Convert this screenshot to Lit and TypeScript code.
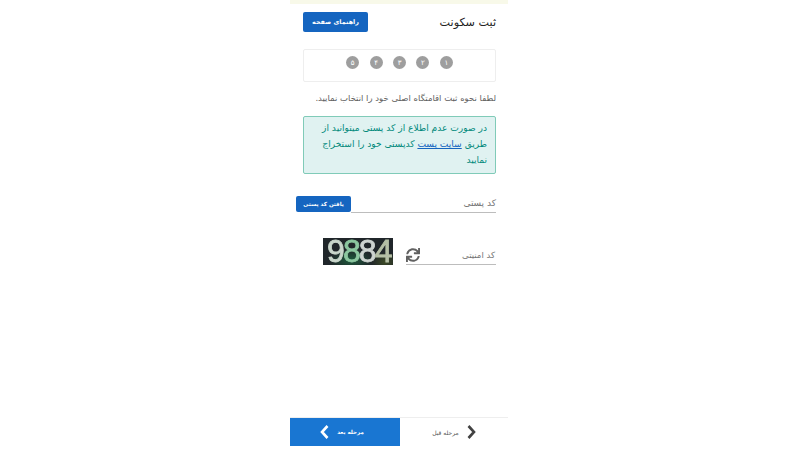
import { LitElement, html, css } from "lit";
import { customElement } from "lit/decorators.js";

@customElement("app-root")
export class AppRoot extends LitElement {
  static styles = css`
    :host { display: block; width: 800px; height: 450px; background: #fff; font-family: "DejaVu Sans", "Noto Sans", sans-serif; overflow: hidden; }
    * { box-sizing: border-box; }
    .col { width: 218px; height: 450px; margin-left: 290px; display: flex; flex-direction: column; direction: rtl; }
    .strip { height: 4px; background: #f8f9e9; flex: none; }
    .body { padding: 0 12px 0 13px; display: flex; flex-direction: column; flex: 1; }
    .head { display: flex; justify-content: space-between; align-items: center; margin-top: 8px; height: 20px; }
    .title { font-size: 11.2px; color: #222; }
    .guide { width: 65px; height: 20px; background: #1565c0; color: #fff; font-size: 6.4px; border-radius: 2px; display: flex; align-items: center; justify-content: center; font-weight: bold; }
    .steps { margin-top: 17px; height: 33px; border: 1px solid #eeeeee; border-radius: 2px; display: flex; justify-content: center; align-items: flex-start; padding-top: 6px; gap: 10.4px; }
    .dot { width: 13px; height: 13px; border-radius: 50%; background: #9e9e9e; color: #fff; font-size: 7px; display: flex; align-items: center; justify-content: center; }
    .lead { margin-top: 9px; font-size: 8.5px; line-height: 14px; color: #616161; white-space: nowrap; }
    .alert { margin-top: 11px; height: 58px; background: #e0f2f1; border: 1px solid #80cbb8; border-radius: 2px; padding: 3px 8px 3px 4px; font-size: 9.1px; line-height: 16px; color: #00897b; }
    .alert div { white-space: nowrap; }
    .alert a { color: #1565c0; text-decoration: underline; }
    .postal { margin-top: 22px; margin-left: -7px; height: 17px; display: flex; }
    .postal .label { flex: 1; border-bottom: 1px solid #bdbdbd; font-size: 9px; color: #757575; line-height: 14px; }
    .find { width: 55px; height: 16px; background: #1565c0; color: #fff; font-size: 5.5px; font-weight: bold; border-radius: 2px; display: flex; align-items: center; justify-content: center; }
    .sec { margin-top: 25px; display: flex; align-items: flex-start; height: 27px; }
    .sec .field { width: 90px; height: 27px; border-bottom: 1px solid #bdbdbd; display: flex; justify-content: space-between; align-items: center; font-size: 8.5px; color: #757575; padding-right: 1px; }
    .sec .field span { padding-top: 7px; }
    .sec svg { width: 14px; height: 14px; margin-top: 8px; display: block; }
    .captcha { margin-right: 13px; width: 70px; height: 27px; direction: ltr; background: radial-gradient(ellipse 22px 11px at 28px 22px, #1d5a3c, transparent), radial-gradient(ellipse 14px 10px at 62px 24px, #3c4a26, transparent), #20262a; color: #d5dbd6; font-family: "Liberation Sans", sans-serif; font-size: 32px; -webkit-text-stroke: 0.8px currentColor; line-height: 27px; letter-spacing: -1.9px; padding-left: 4px; white-space: nowrap; filter: blur(0.3px); }
    .captcha span:nth-child(1) { color: #c9d6cb; }
    .captcha span:nth-child(2) { color: #8cc7a0; }
    .captcha span:nth-child(3) { color: #cdd3d0; }
    .captcha span:nth-child(4) { color: #b5bfa6; }
    .foot { margin-top: auto; margin-bottom: 4px; height: 29px; flex: none; display: flex; border-top: 1px solid #eeeeee; }
    .foot > div { flex: 1; display: flex; align-items: center; justify-content: center; font-size: 6px; }
    .prev { color: #555; gap: 8px; }
    .next { background: #1976d2; color: #fff; gap: 8px; flex: 0 0 110px !important; padding-right: 6px; font-size: 5.5px !important; font-weight: bold; }
    .foot svg { width: 9px; height: 14px; display: block; }
  `;

  render() {
    const digits = ["۱", "۲", "۳", "۴", "۵"];
    return html`<div class="col">
      <div class="strip"></div>
      <div class="body">
        <div class="head">
          <div class="title">ثبت سکونت</div>
          <div class="guide">راهنمای صفحه</div>
        </div>
        <div class="steps">${digits.map((d) => html`<div class="dot">${d}</div>`)}</div>
        <div class="lead">لطفا نحوه ثبت اقامتگاه اصلی خود را انتخاب نمایید.</div>
        <div class="alert">
          <div>در صورت عدم اطلاع از کد پستی میتوانید از</div>
          <div>طریق <a>سایت پست</a> کدپستی خود را استخراج</div>
          <div>نمایید</div>
        </div>
        <div class="postal">
          <div class="label">کد پستی</div>
          <div class="find">یافتن کد پستی</div>
        </div>
        <div class="sec">
          <div class="field">
            <span>کد امنیتی</span>
            <svg viewBox="0 0 512 512" fill="#616161"><path d="M440.65 12.57l4 82.77A247.16 247.16 0 0 0 255.83 8C134.73 8 33.91 94.92 12.29 209.82A12 12 0 0 0 24.09 224h49.05a12 12 0 0 0 11.67-9.26 175.91 175.91 0 0 1 317-56.94l-101.46-4.86a12 12 0 0 0-12.57 12v47.41a12 12 0 0 0 12 12H500a12 12 0 0 0 12-12V12a12 12 0 0 0-12-12h-47.37a12 12 0 0 0-11.98 12.57zM255.83 432a175.61 175.61 0 0 1-146-77.8l101.8 4.87a12 12 0 0 0 12.57-12v-47.4a12 12 0 0 0-12-12H12a12 12 0 0 0-12 12V500a12 12 0 0 0 12 12h47.35a12 12 0 0 0 12-12.6l-4.15-82.57A247.17 247.17 0 0 0 255.83 504c121.11 0 221.93-86.92 243.55-201.82a12 12 0 0 0-11.8-14.18h-49.05a12 12 0 0 0-11.67 9.26A175.86 175.86 0 0 1 255.83 432z"/></svg>
          </div>
          <div class="captcha"><span>9</span><span>8</span><span>8</span><span>4</span></div>
        </div>
      </div>
      <div class="foot">
        <div class="prev">
          <svg viewBox="0 0 9 14"><path d="M1.500 1 7 7l-5.500 6" fill="none" stroke="#424242" stroke-width="2.600"/></svg>
          <span>مرحله قبل</span>
        </div>
        <div class="next">
          <span>مرحله بعد</span>
          <svg viewBox="0 0 9 14"><path d="M7.500 1 2 7l5.500 6" fill="none" stroke="#fff" stroke-width="2.600"/></svg>
        </div>
      </div>
    </div>`;
  }
}
